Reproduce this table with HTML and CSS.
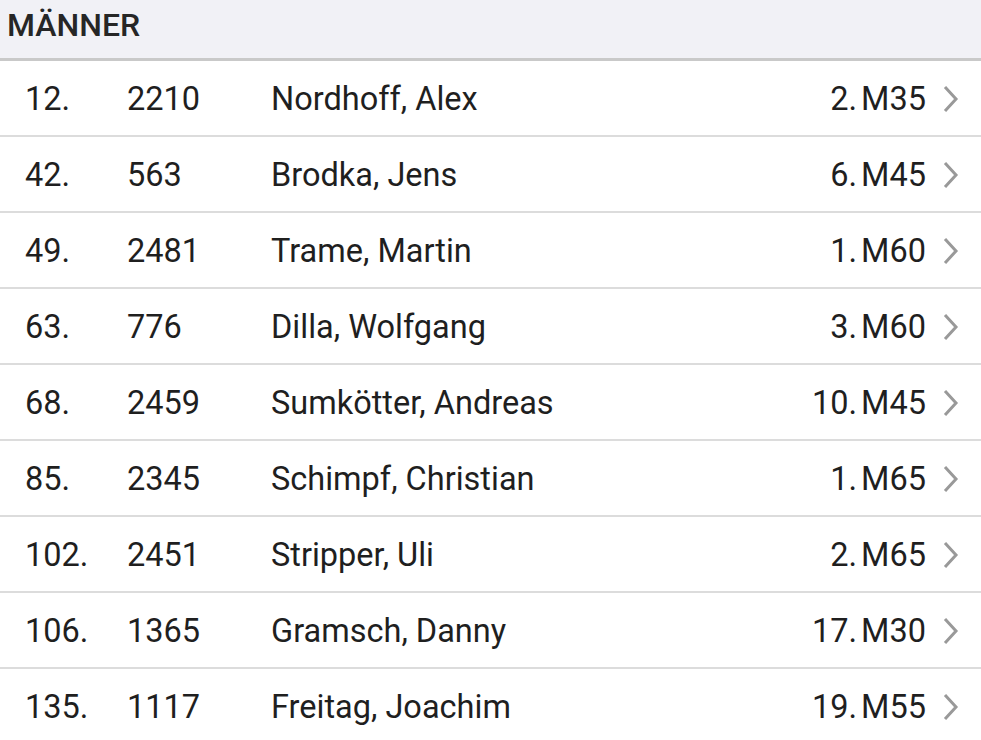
FILE: index.html
```html
<!DOCTYPE html>
<html lang="de">
<head>
<meta charset="utf-8">
<title>Männer</title>
<link rel="stylesheet" href="styles.css">
</head>
<body>
<div class="list">
  <div class="head">MÄNNER</div>
  <div class="row"><span class="rank">12.</span><span class="bib">2210</span><span class="name">Nordhoff, Alex</span><span class="cat">2.<span class="gap"></span>M35</span><svg class="chev" viewBox="0 0 16 28"><path d="M2 2 L13 14 L2 26"/></svg></div>
  <div class="row"><span class="rank">42.</span><span class="bib">563</span><span class="name">Brodka, Jens</span><span class="cat">6.<span class="gap"></span>M45</span><svg class="chev" viewBox="0 0 16 28"><path d="M2 2 L13 14 L2 26"/></svg></div>
  <div class="row"><span class="rank">49.</span><span class="bib">2481</span><span class="name">Trame, Martin</span><span class="cat">1.<span class="gap"></span>M60</span><svg class="chev" viewBox="0 0 16 28"><path d="M2 2 L13 14 L2 26"/></svg></div>
  <div class="row"><span class="rank">63.</span><span class="bib">776</span><span class="name">Dilla, Wolfgang</span><span class="cat">3.<span class="gap"></span>M60</span><svg class="chev" viewBox="0 0 16 28"><path d="M2 2 L13 14 L2 26"/></svg></div>
  <div class="row"><span class="rank">68.</span><span class="bib">2459</span><span class="name">Sumkötter, Andreas</span><span class="cat">10.<span class="gap"></span>M45</span><svg class="chev" viewBox="0 0 16 28"><path d="M2 2 L13 14 L2 26"/></svg></div>
  <div class="row"><span class="rank">85.</span><span class="bib">2345</span><span class="name">Schimpf, Christian</span><span class="cat">1.<span class="gap"></span>M65</span><svg class="chev" viewBox="0 0 16 28"><path d="M2 2 L13 14 L2 26"/></svg></div>
  <div class="row"><span class="rank">102.</span><span class="bib">2451</span><span class="name">Stripper, Uli</span><span class="cat">2.<span class="gap"></span>M65</span><svg class="chev" viewBox="0 0 16 28"><path d="M2 2 L13 14 L2 26"/></svg></div>
  <div class="row"><span class="rank">106.</span><span class="bib">1365</span><span class="name">Gramsch, Danny</span><span class="cat">17.<span class="gap"></span>M30</span><svg class="chev" viewBox="0 0 16 28"><path d="M2 2 L13 14 L2 26"/></svg></div>
  <div class="row"><span class="rank">135.</span><span class="bib">1117</span><span class="name">Freitag, Joachim</span><span class="cat">19.<span class="gap"></span>M55</span><svg class="chev" viewBox="0 0 16 28"><path d="M2 2 L13 14 L2 26"/></svg></div>
</div>
</body>
</html>
```
FILE: styles.css
```css
html, body {
  margin: 0;
  padding: 0;
  background: #ffffff;
}
body {
  font-family: Roboto, "Liberation Sans", sans-serif;
  color: #1f1f1f;
  overflow: hidden;
}
.list {
  display: flex;
  flex-direction: column;
}
.head {
  background: #f1f1f6;
  border-bottom: 3px solid #c9c9c9;
  box-sizing: border-box;
  height: 61px;
  padding: 3px 0 0 7px;
  font-size: 32px;
  font-weight: 500;
  line-height: 44px;
  color: #262626;
}
.row {
  display: flex;
  align-items: center;
  box-sizing: border-box;
  height: 76px;
  padding: 2px 22px 0 25px;
  border-bottom: 2px solid #dcdcdc;
  font-size: 32.5px;
  font-weight: 400;
  line-height: 1;
}
.rank { width: 102px; }
.bib { width: 144px; }
.name { flex: 1; }
.cat {
  display: flex;
  align-items: baseline;
}
.gap {
  display: inline-block;
  width: 4px;
}
.chev {
  width: 16px;
  height: 28px;
  margin-left: 17px;
  fill: none;
  stroke: #999999;
  stroke-width: 3;
}
```
